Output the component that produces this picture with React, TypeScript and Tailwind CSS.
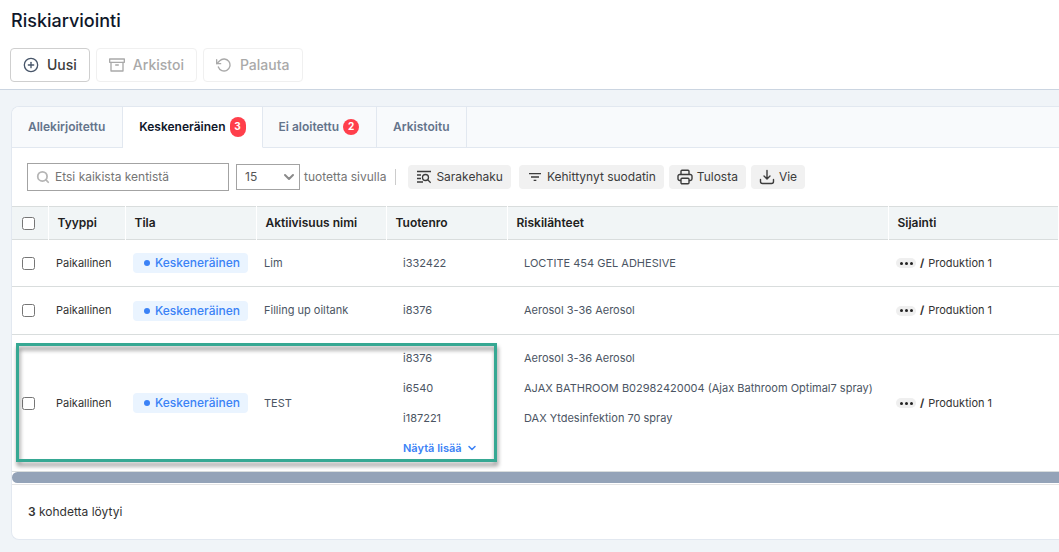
import type { ReactNode } from "react";

import { FiArchive, FiPlusCircle, FiRotateCcw, FiSearch } from "react-icons/fi";
import { LuChevronDown } from "react-icons/lu";
import { MdFilterList } from "react-icons/md";

type Row = { name: string; numbers: string[]; sources: string[]; more?: boolean };

const ROWS: Row[] = [
    { name: "Lim", numbers: ["i332422"], sources: ["LOCTITE 454 GEL ADHESIVE"] },
    { name: "Filling up oiltank", numbers: ["i8376"], sources: ["Aerosol 3-36 Aerosol"] },
    {
        name: "TEST",
        numbers: ["i8376", "i6540", "i187221"],
        sources: [
            "Aerosol 3-36 Aerosol",
            "AJAX BATHROOM B02982420004 (Ajax Bathroom Optimal7 spray)",
            "DAX Ytdesinfektion 70 spray",
        ],
        more: true,
    },
];

const HEADINGS = ["Tyyppi", "Tila", "Aktiivisuus nimi", "Tuotenro", "Riskilähteet", "Sijainti"];

function ColumnSearchIcon() {
    return (
        <svg width="16" height="16" viewBox="0 0 16 16" fill="none" stroke="currentColor" strokeWidth="1.3">
            <path d="M1 2.5h14M1 6h4M1 9.5h4M1 13h6" />
            <circle cx="9.5" cy="8.5" r="3" />
            <path d="M11.7 10.7l3 3" />
        </svg>
    );
}

function PrintIcon() {
    return (
        <svg width="16" height="16" viewBox="0 0 16 16" fill="none" stroke="currentColor" strokeWidth="1.4" strokeLinejoin="round">
            <path d="M4 5.5V2.2a1 1 0 0 1 1-1h6a1 1 0 0 1 1 1v3.3" />
            <path d="M4 11.5H2.7a1.7 1.7 0 0 1-1.7-1.7V7.2a1.7 1.7 0 0 1 1.7-1.7h10.6A1.7 1.7 0 0 1 15 7.2v2.6a1.7 1.7 0 0 1-1.7 1.7H12" />
            <rect x="4" y="9.3" width="8" height="5.5" rx="1" />
        </svg>
    );
}

function DownloadIcon() {
    return (
        <svg width="16" height="16" viewBox="0 0 16 16" fill="none" stroke="currentColor" strokeWidth="1.4" strokeLinecap="round" strokeLinejoin="round">
            <path d="M8 1.5v8.3M5 7l3 3 3-3" />
            <path d="M1.5 10.5v2a2 2 0 0 0 2 2h9a2 2 0 0 0 2-2v-2" />
        </svg>
    );
}

function ActionButton({ icon, children, disabled }: { icon: ReactNode; children: ReactNode; disabled?: boolean }) {
    return (
        <button
            disabled={disabled}
            className="flex h-[34px] items-center gap-2 rounded border border-[#cfcfcf] px-3 text-sm font-medium text-[#3c3c3c] disabled:border-[#f0f0f0] disabled:text-[#a9a9a9]"
        >
            {icon}
            {children}
        </button>
    );
}

function ToolButton({ icon, children }: { icon: ReactNode; children: ReactNode }) {
    return (
        <button className="flex h-6 items-center gap-1 rounded bg-[#f1f1f1] px-2 text-[#3c3c3c]">
            {icon}
            {children}
        </button>
    );
}

function Tab({ active, children }: { active?: boolean; children: ReactNode }) {
    return (
        <button
            role="tab"
            aria-selected={active ? true : false}
            className={`flex items-center gap-1 border-r border-b border-r-[#e2e8f0] pl-4 font-semibold ${
                active ? "border-b-white bg-white pr-4 text-[#0f172a]" : "border-b-[#e2e8f0] bg-[#f8fafc] pr-[17px] text-[#64748b]"
            }`}
        >
            {children}
        </button>
    );
}

export default function App() {
    return (
        <div className="min-h-screen overflow-hidden bg-[#f0f4f8] font-['Inter',sans-serif] text-xs text-[#333333]">
            <header className="border-b border-[#cbd5e1] bg-white px-[10px] pt-2 pb-[7px]">
                <h1 className="pl-px text-lg leading-[26px] font-medium text-[#0f172a]">Riskiarviointi</h1>
                <div className="mt-[14px] flex gap-[6px]">
                    <ActionButton icon={<FiPlusCircle size={16} className="text-[#475569]" />}>Uusi</ActionButton>
                    <ActionButton disabled icon={<FiArchive size={16} />}>Arkistoi</ActionButton>
                    <ActionButton disabled icon={<FiRotateCcw size={16} />}>Palauta</ActionButton>
                </div>
            </header>

            <main className="mt-4 ml-[11px] overflow-hidden rounded-l-lg border-y border-l border-[#e2e8f0] bg-white">
                {/* Tabs */}
                <div role="tablist" className="flex h-[41px]">
                    <Tab>Allekirjoitettu</Tab>
                    <Tab active>
                        Keskeneräinen
                        <span className="flex h-5 w-4 items-center justify-center rounded-full bg-[#ff3f4b] text-[10px] font-bold text-white">3</span>
                    </Tab>
                    <Tab>
                        Ei aloitettu
                        <span className="flex size-4 items-center justify-center rounded-full bg-[#ff3f4b] text-[10px] font-bold text-white">2</span>
                    </Tab>
                    <Tab>Arkistoitu</Tab>
                    <div className="flex-1 border-b border-[#e2e8f0] bg-[#f8fafc]" />
                </div>

                {/* Toolbar */}
                <div className="flex h-[58px] items-center pl-[15px]">
                    <label className="flex h-7 w-[202px] items-center gap-1 border border-[#a3a3a3] px-2">
                        <FiSearch size={14} className="shrink-0 stroke-3 text-[#b5b5b5]" />
                        <input
                            aria-label="Etsi kaikista kentistä"
                            placeholder="Etsi kaikista kentistä"
                            className="min-w-0 flex-1 pl-px outline-none placeholder:text-[#757575]"
                        />
                    </label>
                    <div className="relative ml-[7px]">
                        <select
                            aria-label="tuotetta sivulla"
                            defaultValue="15"
                            className="h-[26px] w-16 appearance-none border border-[#a3a3a3] bg-white px-2 text-[#555555]"
                        >
                            <option>15</option>
                            <option>30</option>
                            <option>50</option>
                        </select>
                        <LuChevronDown size={16} className="pointer-events-none absolute top-[5px] right-[3px] stroke-3 text-[#8a8a8a]" />
                    </div>
                    <span className="ml-1 text-[#757575]">tuotetta sivulla</span>
                    <span className="mr-3 ml-[9px] h-4 border-l border-[#cccccc]" />
                    <ToolButton icon={<ColumnSearchIcon />}>Sarakehaku</ToolButton>
                    <div className="ml-2 flex gap-[5px]">
                        <ToolButton icon={<MdFilterList size={16} />}>Kehittynyt suodatin</ToolButton>
                        <ToolButton icon={<PrintIcon />}>Tulosta</ToolButton>
                        <ToolButton icon={<DownloadIcon />}>Vie</ToolButton>
                    </div>
                </div>

                {/* Table */}
                <table className="w-full table-fixed border-collapse text-left">
                    <colgroup>
                        <col className="w-9" />
                        <col className="w-[77px]" />
                        <col className="w-[131px]" />
                        <col className="w-[130px]" />
                        <col className="w-[121px]" />
                        <col className="w-[381px]" />
                        <col />
                    </colgroup>
                    <thead>
                        <tr className="h-[33px] border-y border-[#d9dddd] bg-[#f1f5f6]">
                            <th className="border-r border-white pl-[10px]">
                                <input type="checkbox" aria-label="Valitse kaikki" className="block size-[13px]" />
                            </th>
                            {HEADINGS.map((heading) => (
                                <th key={heading} className="border-r border-white pl-[9px] font-semibold text-[#212121]">
                                    {heading}
                                </th>
                            ))}
                        </tr>
                    </thead>
                    <tbody className="text-[11px]">
                        {ROWS.map((row) => (
                            <tr key={row.name} className="relative border-b border-[#d9dddd] even:h-12">
                                <td className="pl-[10px]">
                                    <input type="checkbox" aria-label={row.name} className="block size-[13px]" />
                                    {row.more && (
                                        <span className="pointer-events-none absolute top-2 bottom-[9px] left-1 w-[481px] border-3 border-[#36a893] drop-shadow-[1px_4px_2px_rgba(0,0,0,0.45)]" />
                                    )}
                                </td>
                                <td className="px-2">Paikallinen</td>
                                <td className="px-2">
                                    <span className="inline-flex h-5 items-center gap-[5px] rounded bg-[#eaf4ff] pr-2 pl-[11px] text-xs font-medium text-[#3b82f6]">
                                        <span className="size-[6px] rounded-full bg-[#3b82f6]" />
                                        Keskeneräinen
                                    </span>
                                </td>
                                <td className="px-2 text-[#4b5563]">{row.name}</td>
                                <td className="py-2 pl-[17px] align-top leading-[30px] text-[#4b5563]">
                                    {row.numbers.map((n) => (
                                        <p key={n}>{n}</p>
                                    ))}
                                    {row.more && (
                                        <button className="flex items-center gap-1 font-semibold text-[#3b82f6]">
                                            Näytä lisää
                                            <LuChevronDown size={12} className="stroke-3" />
                                        </button>
                                    )}
                                </td>
                                <td className="py-2 pl-[17px] align-top leading-[30px] text-[#4b5563]">
                                    {row.sources.map((s) => (
                                        <p key={s}>{s}</p>
                                    ))}
                                </td>
                                <td className="px-2">
                                    <div className="flex items-center gap-1">
                                        <button aria-label="Näytä polku" className="flex h-[10px] w-5 items-center justify-center gap-[2px] rounded-full bg-[#efefef]">
                                            <span className="size-[3px] rounded-full bg-[#222222]" />
                                            <span className="size-[3px] rounded-full bg-[#222222]" />
                                            <span className="size-[3px] rounded-full bg-[#222222]" />
                                        </button>
                                        <span className="font-bold">/</span>
                                        Produktion 1
                                    </div>
                                </td>
                            </tr>
                        ))}
                    </tbody>
                </table>

                {/* Scroll track */}
                <div className="border-b border-[#e5e5e5] pb-px">
                    <div className="h-[11px] rounded-l-full bg-[#94a3b8]" />
                </div>

                <footer className="px-4 py-[19px] leading-4">
                    <b className="font-semibold">3</b> kohdetta löytyi
                </footer>
            </main>
        </div>
    );
}
